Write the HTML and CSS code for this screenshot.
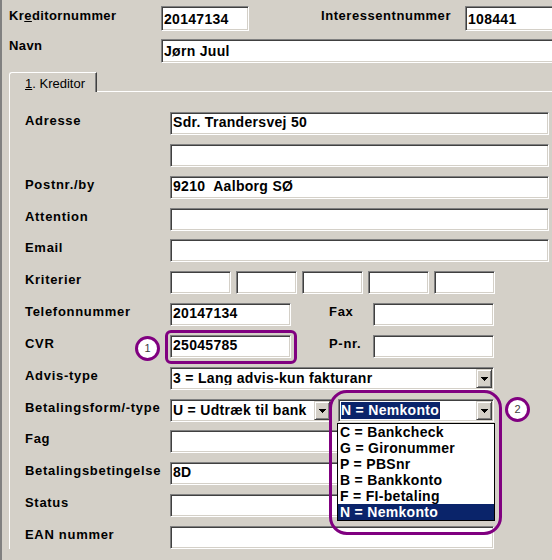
FILE: index.html
```html
<!DOCTYPE html>
<html>
<head>
<meta charset="utf-8">
<link rel="stylesheet" href="styles.css">
</head>
<body>
<div class="win">
  <div class="top">
    <div class="trow r1">
      <div class="tlabel">Kr<u>e</u>ditornummer</div>
      <div class="field tfield f-kred">20147134</div>
      <div class="tlabel2">Interessentnummer</div>
      <div class="field tfield f-int">108441</div>
    </div>
    <div class="trow r2">
      <div class="tlabel">Navn</div>
      <div class="field tfield f-navn">Jørn Juul</div>
    </div>
  </div>
  <div class="tabs">
    <div class="tab"><u>1</u>. Kreditor</div>
  </div>
  <div class="panel">
    <div class="row"><div class="lbl">Adresse</div><div class="field w-full">Sdr. Trandersvej 50</div></div>
    <div class="row"><div class="lbl"></div><div class="field w-full"></div></div>
    <div class="row"><div class="lbl">Postnr./by</div><div class="field w-full">9210&nbsp; Aalborg SØ</div></div>
    <div class="row"><div class="lbl">Attention</div><div class="field w-full"></div></div>
    <div class="row"><div class="lbl">Email</div><div class="field w-full"></div></div>
    <div class="row"><div class="lbl">Kriterier</div>
      <div class="krit">
        <div class="field w-k"></div><div class="field w-k"></div><div class="field w-k"></div><div class="field w-k"></div><div class="field w-k"></div>
      </div>
    </div>
    <div class="row"><div class="lbl">Telefonnummer</div><div class="field w-half">20147134</div><div class="lbl2">Fax</div><div class="field w-half"></div></div>
    <div class="row"><div class="lbl">CVR</div><div class="field w-half">25045785</div><div class="lbl2">P-nr.</div><div class="field w-half"></div></div>
    <div class="row"><div class="lbl">Advis-type</div>
      <div class="field select w-mid"><span class="stext">3 = Lang advis-kun fakturanr</span><span class="btn"><svg width="7" height="4" viewBox="0 0 7 4" shape-rendering="crispEdges"><rect x="0" y="0" width="7" height="1"/><rect x="1" y="1" width="5" height="1"/><rect x="2" y="2" width="3" height="1"/><rect x="3" y="3" width="1" height="1"/></svg></span></div>
    </div>
    <div class="row"><div class="lbl">Betalingsform/-type</div>
      <div class="field select w-s1"><span class="stext">U = Udtræk til bank</span><span class="btn"><svg width="7" height="4" viewBox="0 0 7 4" shape-rendering="crispEdges"><rect x="0" y="0" width="7" height="1"/><rect x="1" y="1" width="5" height="1"/><rect x="2" y="2" width="3" height="1"/><rect x="3" y="3" width="1" height="1"/></svg></span></div>
      <div class="field select w-s2"><span class="stext"><span class="hl">N = Nemkonto</span></span><span class="btn"><svg width="7" height="4" viewBox="0 0 7 4" shape-rendering="crispEdges"><rect x="0" y="0" width="7" height="1"/><rect x="1" y="1" width="5" height="1"/><rect x="2" y="2" width="3" height="1"/><rect x="3" y="3" width="1" height="1"/></svg></span></div>
    </div>
    <div class="row"><div class="lbl">Fag</div><div class="field w-mid"></div></div>
    <div class="row"><div class="lbl">Betalingsbetingelse</div><div class="field w-mid">8D</div></div>
    <div class="row"><div class="lbl">Status</div><div class="field w-mid"></div></div>
    <div class="row"><div class="lbl">EAN nummer</div><div class="field w-mid"></div></div>
  </div>

  <div class="mark mark1"></div>
  <div class="badge badge1">1</div>
  <ul class="dlist">
    <li>C = Bankcheck</li>
    <li>G = Gironummer</li>
    <li>P = PBSnr</li>
    <li>B = Bankkonto</li>
    <li>F = FI-betaling</li>
    <li class="sel">N = Nemkonto</li>
  </ul>
  <div class="mark mark2"></div>
  <div class="badge badge2">2</div>
</div>
</body>
</html>
```

FILE: styles.css
```css
html, body {
  margin: 0;
  padding: 0;
}
body {
  width: 552px;
  height: 560px;
  overflow: hidden;
  background: #d4d0c8;
  font-family: "Liberation Sans", Arial, sans-serif;
  color: #000;
}
.win {
  position: relative;
  height: 560px;
  border-left: 2px solid #808080;
  box-sizing: border-box;
  overflow: hidden;
}
.top {
  padding-top: 6px;
}
.trow {
  display: flex;
  align-items: flex-start;
  white-space: nowrap;
}
.r1 { height: 25px; }
.r2 { height: 24px; margin-top: 8px; }
.tlabel, .tlabel2, .lbl, .lbl2 {
  font-weight: bold;
  font-size: 13px;
  line-height: 13px;
  letter-spacing: 0.4px;
  white-space: nowrap;
  flex: none;
}
.tlabel {
  width: 152px;
  padding-left: 7px;
  padding-top: 3px;
}
.r2 .tlabel { padding-top: 0; }
.tlabel2 {
  width: 144px;
  margin-left: 72px;
  padding-top: 3px;
  letter-spacing: 0.55px;
}
.field {
  box-sizing: border-box;
  height: 23px;
  flex: none;
  background: #fff;
  border-top: 1px solid #808080;
  border-left: 1px solid #808080;
  border-bottom: 1px solid #fff;
  border-right: 1px solid #fff;
  box-shadow: inset 1px 1px 0 #404040, inset -1px -1px 0 #d4d0c8;
  font-weight: bold;
  font-size: 14px;
  line-height: 13px;
  letter-spacing: 0.3px;
  padding: 3px 2px 0 2px;
  white-space: nowrap;
  overflow: hidden;
}
.tfield {
  height: 25px;
  padding-top: 6px;
}
.r2 .tfield { height: 24px; padding-top: 5px; }
.f-kred { width: 88px; }
.f-int { width: 100px; }
.f-navn { width: 400px; }

.tabs {
  margin-top: 9px;
  padding-left: 7px;
  height: 19px;
  position: relative;
  z-index: 2;
}
.tab {
  box-sizing: border-box;
  width: 88px;
  height: 20px;
  background: #d4d0c8;
  border-top: 1px solid #fff;
  border-left: 1px solid #fff;
  border-right: 1px solid #404040;
  box-shadow: inset -1px 0 0 #808080;
  border-top-left-radius: 3px;
  font-size: 13px;
  line-height: 13px;
  padding-top: 4px;
  padding-left: 15px;
  white-space: nowrap;
}
.panel {
  margin-left: 7px;
  border-top: 1px solid #fff;
  border-left: 1px solid #fff;
  padding-top: 20px;
  padding-left: 15px;
  display: flex;
  flex-direction: column;
  row-gap: 8.85px;
}
.row {
  display: flex;
  align-items: flex-start;
  height: 23px;
}
.lbl {
  width: 145px;
  padding-top: 2px;
  letter-spacing: 0.7px;
}
.lbl2 {
  width: 44px;
  margin-left: 38px;
  padding-top: 2px;
  letter-spacing: 0.7px;
}
.w-full { width: 379px; }
.w-half { width: 121px; }
.w-mid { width: 324px; }
.w-s1 { width: 162px; }
.w-s2 { width: 156px; margin-left: 6px; }
.w-k { width: 61px; }
.krit {
  display: flex;
  gap: 5px;
}
.select {
  display: flex;
  align-items: flex-start;
  padding: 1px 1px 1px 2px;
}
.stext {
  flex: 1;
  padding-top: 3px;
  overflow: hidden;
}
.hl {
  display: inline-block;
  background: #0a246a;
  color: #fff;
  margin-top: -2px;
  margin-left: -1px;
  height: 17px;
  line-height: 17px;
  padding: 0 1px;
}
.btn {
  flex: none;
  box-sizing: border-box;
  width: 16px;
  height: 19px;
  background: #d4d0c8;
  border-top: 1px solid #d4d0c8;
  border-left: 1px solid #d4d0c8;
  border-right: 1px solid #404040;
  border-bottom: 1px solid #404040;
  box-shadow: inset 1px 1px 0 #fff, inset -1px -1px 0 #808080;
  display: flex;
  align-items: center;
  justify-content: center;
}
.btn svg { display: block; fill: #000; margin-top: 1px; }

.mark {
  position: absolute;
  box-sizing: border-box;
  border: 3px solid #800080;
}
.mark1 {
  left: 163px;
  top: 330px;
  width: 132px;
  height: 34px;
  border-radius: 6px;
}
.mark2 {
  left: 327px;
  top: 390px;
  width: 173px;
  height: 145px;
  border-radius: 18px;
}
.badge {
  position: absolute;
  box-sizing: border-box;
  width: 25px;
  height: 25px;
  border: 3px solid #800080;
  border-radius: 50%;
  background: #fff;
  color: #404040;
  font-size: 11px;
  line-height: 19px;
  text-align: center;
}
.badge1 { left: 133px; top: 336px; }
.badge2 { left: 503px; top: 397px; }
.dlist {
  position: absolute;
  left: 335px;
  top: 423px;
  width: 158px;
  margin: 0;
  padding: 0;
  list-style: none;
  background: #fff;
  border: 1px solid #000;
  box-sizing: border-box;
}
.dlist li {
  height: 16px;
  font-weight: bold;
  font-size: 14px;
  line-height: 16px;
  letter-spacing: 0.3px;
  padding-left: 2px;
  white-space: nowrap;
}
.dlist li.sel {
  background: #0a246a;
  color: #fff;
}
```
